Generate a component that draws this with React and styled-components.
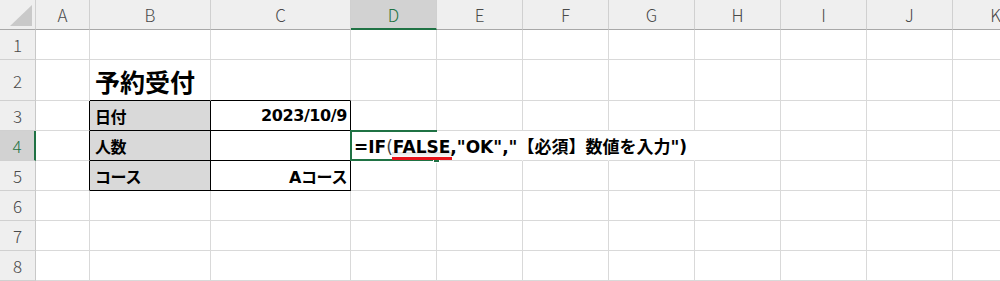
import React from 'react';
import styled, { createGlobalStyle, css } from 'styled-components';

const GREEN = '#1f7244';
const GRID = '#d9d9d9';
const CELL_FONT = '"DejaVu Sans", "Noto Sans CJK JP", sans-serif';

const columns = [
  { key: 'A', width: 54 },
  { key: 'B', width: 121 },
  { key: 'C', width: 140 },
  { key: 'D', width: 86 },
  { key: 'E', width: 86 },
  { key: 'F', width: 86 },
  { key: 'G', width: 86 },
  { key: 'H', width: 86 },
  { key: 'I', width: 86 },
  { key: 'J', width: 86 },
  { key: 'K', width: 86 },
];

const rows = [
  { n: 1, height: 30 },
  { n: 2, height: 41 },
  { n: 3, height: 30 },
  { n: 4, height: 30 },
  { n: 5, height: 30 },
  { n: 6, height: 30 },
  { n: 7, height: 30 },
  { n: 8, height: 30 },
];

// 表の罫線（黒）と中身。spill = はみ出した文字の下に隠れる縦線
const cells = {
  A3: { rb: true }, A4: { rb: true }, A5: { rb: true },
  B2: { title: '予約受付', bb: true },
  C2: { bb: true },
  B3: { text: '日付', label: true, rb: true, bb: true },
  C3: { text: '2023/10/9', right: true, rb: true, bb: true },
  B4: { text: '人数', label: true, rb: true, bb: true },
  C4: { rb: true, bb: true },
  B5: { text: 'コース', label: true, rb: true, bb: true },
  C5: { text: 'Aコース', right: true, rb: true, bb: true },
  D4: { active: true, spill: true },
  E4: { spill: true },
  F4: { spill: true },
  G4: { spill: true },
};

const activeCol = 'D';
const activeRow = 4;

const GlobalStyle = createGlobalStyle`
  html, body {
    margin: 0;
    padding: 0;
    background: #fff;
    overflow: hidden;
  }
  body {
    font-family: "Noto Sans CJK JP", "Noto Sans", sans-serif;
  }
`;

const Sheet = styled.div`
  display: grid;
  grid-template-columns: 36px ${columns.map((c) => c.width + 'px').join(' ')};
  grid-template-rows: 30px ${rows.map((r) => r.height + 'px').join(' ')};
  width: 1000px;
  height: 281px;
  overflow: hidden;
`;

const Corner = styled.div`
  box-sizing: border-box;
  background: #efefef;
  border-right: 1px solid #d0d0d0;
  border-bottom: 1px solid #a8a8a8;
  display: flex;
  align-items: flex-end;
  justify-content: flex-end;
  padding: 0 3px 3px 0;
`;

const ColHead = styled.div`
  box-sizing: border-box;
  background: ${(p) => (p.$selected ? '#d2d2d2' : '#efefef')};
  border-right: 1px solid #d0d0d0;
  border-bottom: ${(p) => (p.$selected ? `2px solid ${GREEN}` : '1px solid #a8a8a8')};
  color: ${(p) => (p.$selected ? GREEN : '#4a4a4a')};
  display: flex;
  align-items: center;
  justify-content: center;
  font-size: 17px;
  font-weight: 300;
  white-space: nowrap;
  padding-top: ${(p) => (p.$selected ? '1px' : '0')};
`;

const RowHead = styled.div`
  box-sizing: border-box;
  background: ${(p) => (p.$selected ? '#d2d2d2' : '#efefef')};
  border-right: ${(p) => (p.$selected ? `2px solid ${GREEN}` : '1px solid #c8c8c8')};
  border-bottom: 1px solid #d0d0d0;
  color: ${(p) => (p.$selected ? GREEN : '#4a4a4a')};
  display: flex;
  align-items: center;
  justify-content: center;
  font-size: 17px;
  font-weight: 300;
`;

const Cell = styled.div`
  box-sizing: border-box;
  position: relative;
  border-right: 1px solid ${(p) => (p.$rb ? '#000' : p.$spill ? '#fff' : GRID)};
  border-bottom: 1px solid ${(p) => (p.$bb ? '#000' : GRID)};
  background: ${(p) => (p.$label ? '#d9d9d9' : '#fff')};
  display: flex;
  align-items: center;
  justify-content: ${(p) => (p.$right ? 'flex-end' : 'flex-start')};
  padding: 0 3px 0 5px;
  font-family: ${CELL_FONT};
  font-size: 16px;
  font-weight: 700;
  letter-spacing: -0.4px;
  color: #000;
  white-space: nowrap;
  ${(p) =>
    p.$active &&
    css`
      overflow: visible;
      z-index: 2;
      padding-left: 3px;
    `}
`;

const Title = styled.span`
  font-family: "Noto Sans CJK JP", sans-serif;
  font-size: 25px;
  font-weight: 700;
  letter-spacing: 0;
  padding-top: 1px;
`;

const Selection = styled.div`
  position: absolute;
  top: -1px;
  left: -1px;
  right: -1px;
  bottom: -1px;
  border: 2px solid ${GREEN};
  border-right: none;
  pointer-events: none;
`;

const FillHandle = styled.div`
  position: absolute;
  right: -3px;
  bottom: -4px;
  width: 5px;
  height: 5px;
  background: ${GREEN};
  border: 1px solid #fff;
`;

const Formula = styled.span`
  position: relative;
  z-index: 1;
  font-size: 17px;
  font-weight: 700;
  letter-spacing: 0;
`;

const Paren = styled.span`
  color: #444;
  font-weight: 400;
`;

const Marked = styled.span`
  position: relative;
  &::before {
    content: '';
    position: absolute;
    left: -1px;
    right: -2px;
    bottom: -1px;
    height: 6px;
    background: linear-gradient(rgba(0, 0, 0, 0.12), rgba(0, 0, 0, 0));
  }
  &::after {
    content: '';
    position: absolute;
    left: -1px;
    right: -2px;
    bottom: -3px;
    height: 3px;
    background: #e8141b;
  }
`;

const CornerMark = () => (
  <svg width="22" height="21" viewBox="0 0 22 21">
    <polygon points="22,0 22,21 0,21" fill="#c9c9c9" />
  </svg>
);

const App = () => {
  return (
    <>
      <GlobalStyle />
      <Sheet>
        <Corner>
          <CornerMark />
        </Corner>
        {columns.map((c) => (
          <ColHead key={c.key} $selected={c.key === activeCol}>
            {c.key}
          </ColHead>
        ))}
        {rows.map((r) => (
          <React.Fragment key={r.n}>
            <RowHead $selected={r.n === activeRow}>{r.n}</RowHead>
            {columns.map((c) => {
              const id = c.key + r.n;
              const cell = cells[id] || {};
              return (
                <Cell
                  key={id}
                  $rb={cell.rb}
                  $bb={cell.bb}
                  $label={cell.label}
                  $right={cell.right}
                  $active={cell.active}
                  $spill={cell.spill}
                >
                  {cell.title && <Title>{cell.title}</Title>}
                  {cell.text}
                  {cell.active && (
                    <>
                      <Selection>
                        <FillHandle />
                      </Selection>
                      <Formula>
                        =IF<Paren>(</Paren>
                        <Marked>FALSE</Marked>,"OK","【必須】数値を入力")
                      </Formula>
                    </>
                  )}
                </Cell>
              );
            })}
          </React.Fragment>
        ))}
      </Sheet>
    </>
  );
};

export default App;
